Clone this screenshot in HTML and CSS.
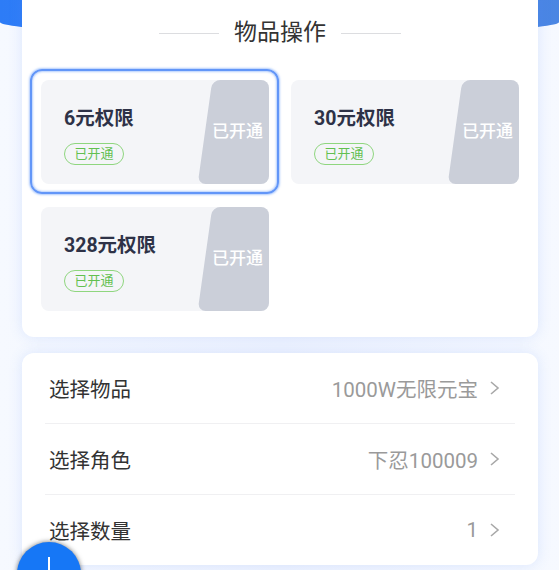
FILE: index.html
```html
<!DOCTYPE html>
<html lang="zh-CN">
<head>
  <meta charset="UTF-8">
  <meta name="viewport" content="width=device-width, initial-scale=1.0">
  <title>物品操作</title>
  <link rel="stylesheet" href="styles.css">
</head>
<body>

<div class="page">
  <div class="card items-card">
    <div class="card-title">
      <span class="title-line"></span>
      <span class="title-text">物品操作</span>
      <span class="title-line"></span>
    </div>
    <div class="items">
      <div class="item selected">
        <div class="item-name">6元权限</div>
        <span class="item-badge">已开通</span>
        <div class="item-tag"><span>已开通</span></div>
      </div>
      <div class="item">
        <div class="item-name">30元权限</div>
        <span class="item-badge">已开通</span>
        <div class="item-tag"><span>已开通</span></div>
      </div>
      <div class="item">
        <div class="item-name">328元权限</div>
        <span class="item-badge">已开通</span>
        <div class="item-tag"><span>已开通</span></div>
      </div>
    </div>
  </div>

  <div class="card form-card">
    <div class="row">
      <span class="row-label">选择物品</span>
      <span class="row-value">1000W无限元宝</span>
      <svg class="chevron" viewBox="0 0 12 14"><polyline points="2,1 9,7 2,13"/></svg>
    </div>
    <div class="row">
      <span class="row-label">选择角色</span>
      <span class="row-value">下忍100009</span>
      <svg class="chevron" viewBox="0 0 12 14"><polyline points="2,1 9,7 2,13"/></svg>
    </div>
    <div class="row">
      <span class="row-label">选择数量</span>
      <span class="row-value">1</span>
      <svg class="chevron" viewBox="0 0 12 14"><polyline points="2,1 9,7 2,13"/></svg>
    </div>
  </div>
</div>

<button class="fab"><span class="fab-plus"></span></button>

</body>
</html>
```

FILE: styles.css
```css
html {
  overflow: hidden;
}
body {
  margin: 0;
  font-family: Roboto, "Noto Sans CJK SC", sans-serif;
  background: linear-gradient(90deg, #f6f9ff, #eef3fe 50%, #f6f9ff);
  overflow: hidden;
  position: relative;
  height: 570px;
}
/* blue header behind the cards */
body::before {
  content: "";
  position: absolute;
  top: 0;
  left: 0;
  width: 100%;
  height: 35px;
  background: linear-gradient(90deg, #2d7cf7, #3c82ee 50%, #4b86e3);
  border-radius: 0 0 50% 50% / 0 0 13px 13px;
}
.page {
  position: relative;
  margin-top: -20px;
  padding: 0 21px 0 22px;
}
.card {
  background: #fff;
  border-radius: 12px;
  box-shadow: 0 0 14px rgba(90, 135, 240, 0.16);
}
.items-card {
  padding: 38px 19px 26px;
}
.card-title {
  display: flex;
  justify-content: center;
  align-items: center;
  gap: 15px;
  height: 30px;
}
.title-line {
  width: 60px;
  height: 1px;
  background-color: #dcdde0;
}
.title-text {
  font-size: 23px;
  color: #333;
  line-height: 30px;
}
.items {
  margin-top: 32px;
  display: grid;
  grid-template-columns: repeat(2, 228px);
  column-gap: 22px;
  row-gap: 23px;
}
.item {
  position: relative;
  height: 104px;
  box-sizing: border-box;
  padding: 27px 0 0 23px;
  background-color: #f4f5f8;
  border-radius: 8px;
}
.item.selected::before {
  content: "";
  position: absolute;
  top: -11px;
  left: -11px;
  right: -10px;
  bottom: -10px;
  border: 2px solid #6296f8;
  border-radius: 12px;
  box-shadow: 0 0 2px 1px rgba(110, 160, 250, 0.55), inset 0 0 2px 1px rgba(110, 160, 250, 0.5);
}
.item-name {
  font-size: 19.5px;
  font-weight: bold;
  line-height: 24px;
  color: #2e3247;
}
.item-badge {
  display: inline-block;
  margin-top: 12px;
  width: 60px;
  height: 22px;
  box-sizing: border-box;
  border: 1px solid #8fd67f;
  border-radius: 11px;
  font-size: 13px;
  line-height: 20px;
  text-align: center;
  color: #62c050;
}
.item-tag {
  position: absolute;
  top: 0;
  right: 0;
  bottom: 0;
  width: 72px;
  border-radius: 0 8px 8px 0;
  overflow: hidden;
}
.item-tag::before {
  content: "";
  position: absolute;
  top: 0;
  bottom: 0;
  left: 8px;
  width: 90px;
  background-color: #cbcfd9;
  border-radius: 8px;
  transform: skewX(-8deg);
  transform-origin: left center;
}
.item-tag span {
  position: absolute;
  left: 15px;
  top: 39px;
  font-size: 17px;
  font-weight: 500;
  line-height: 24px;
  color: #fff;
  white-space: nowrap;
}
.form-card {
  margin-top: 16px;
  padding: 0 23px;
  height: 212px;
}
.row {
  display: flex;
  align-items: center;
  height: 70px;
  padding: 0 14px 0 4px;
  border-bottom: 1px solid #f0f0f2;
}
.row:last-child {
  border-bottom: none;
}
.row-label {
  font-size: 20.5px;
  color: #333;
}
.row-value {
  margin-left: auto;
  font-size: 20.5px;
  color: #9a9a9a;
}
.chevron {
  width: 12px;
  height: 14px;
  margin-left: 11px;
  fill: none;
  stroke: #a8a8a8;
  stroke-width: 1.6;
}
.fab {
  position: absolute;
  left: 17px;
  top: 542px;
  width: 64px;
  height: 64px;
  border: none;
  border-radius: 50%;
  background-color: #1677f6;
  box-shadow: 0 0 5px rgba(0, 0, 0, 0.55);
  padding: 0;
}
.fab-plus {
  position: absolute;
  left: 31px;
  top: 15px;
  width: 2px;
  height: 34px;
  background-color: #fff;
}
.fab-plus::after {
  content: "";
  position: absolute;
  left: -16px;
  top: 16px;
  width: 34px;
  height: 2px;
  background-color: #fff;
}
```
